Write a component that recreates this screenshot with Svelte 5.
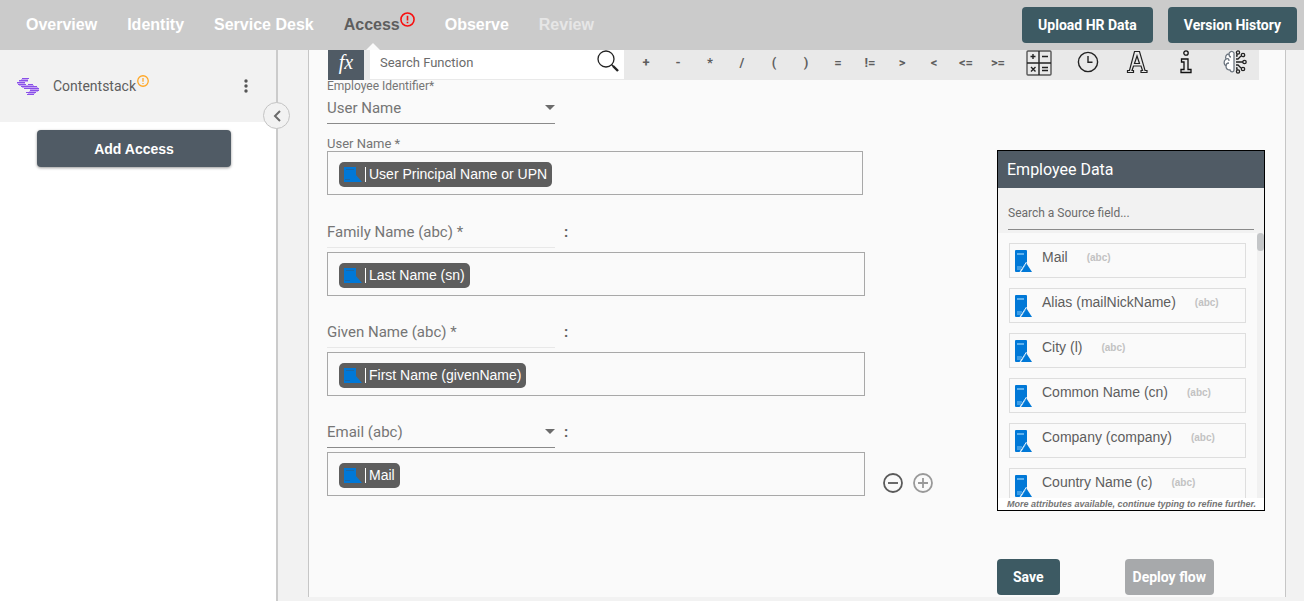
<script lang="ts">
    type Tab = { name: string; state?: string };

    const tabs: Tab[] = [
        { name: "Overview" },
        { name: "Identity" },
        { name: "Service Desk" },
        { name: "Access", state: "active" },
        { name: "Observe" },
        { name: "Review", state: "muted" },
    ];

    const operators = ["+", "-", "*", "/", "(", ")", "=", "!=", ">", "<", "<=", ">="];

    const mappings = [
        { field: "Family Name (abc) *", value: "Last Name (sn)", editable: false },
        { field: "Given Name (abc) *", value: "First Name (givenName)", editable: false },
        { field: "Email (abc)", value: "Mail", editable: true },
    ];

    const attributes = [
        "Mail",
        "Alias (mailNickName)",
        "City (l)",
        "Common Name (cn)",
        "Company (company)",
        "Country Name (c)",
    ];

    let functionQuery = $state("");
    let sourceQuery = $state("");

    let shown = $derived(
        attributes.filter((a) => a.toLowerCase().includes(sourceQuery.toLowerCase())),
    );
</script>

{#snippet alertIcon()}
    <svg viewBox="0 0 16 16" fill="none" stroke="currentColor" stroke-width="1.7">
        <circle cx="8" cy="8" r="7" />
        <path d="M8 4v5M8 10.5v1.6" />
    </svg>
{/snippet}

{#snippet chip(text: string)}
    <span class="chip">
        <svg width="18" height="15" viewBox="0 0 18 15">
            <path d="M0 0h12v9l-4 6H0z" fill="#0078d7" />
            <path d="M12 8l6 7H7z" fill="#0078d7" />
            <path d="M2 2.5h8M1 12.5h5" stroke="#1b68a8" />
        </svg>
        <span class="chip-text">{text}</span>
    </span>
{/snippet}

<header>
    <nav>
        {#each tabs as tab}
            <a href="#{tab.name}" class={tab.state}>
                {tab.name}
                {#if tab.state === "active"}
                    <span class="tab-alert">{@render alertIcon()}</span>
                {/if}
            </a>
        {/each}
    </nav>
    <div class="header-actions">
        <button class="teal">Upload HR Data</button>
        <button class="teal">Version History</button>
    </div>
</header>

<div class="layout">
    <aside>
        <div class="app-item">
            <svg class="logo" width="22" height="17" viewBox="0 0 22 17" fill="none">
                <g stroke="#c3a3f3" stroke-width="1">
                    <path d="M4 1.5h7M2 3.500h9M0 5.500h8M2 7.500h11M5 9.500h8" />
                    <path d="M10 7.500h7M12 9.500h9M13 11.500h9M12 13.500h9M11 15.500h7" />
                </g>
                <g stroke="#8a50e8" stroke-width="1.1">
                    <path d="M5 .5h7M2 2.500h9M0 4.500h8M1 6.500h8M4 8.500h8M7 10.500h6" />
                    <path d="M11 6.500h5M12 8.500h8M13 10.500h9M13 12.500h9M9 14.500h10M10 16.500h7" />
                </g>
            </svg>
            <span class="app-name">Contentstack</span>
            <span class="app-alert">{@render alertIcon()}</span>
            <button class="more" aria-label="More options">
                <svg width="4" height="14" viewBox="0 0 4 14" fill="#555">
                    <circle cx="2" cy="2" r="1.7" />
                    <circle cx="2" cy="7" r="1.7" />
                    <circle cx="2" cy="12" r="1.7" />
                </svg>
            </button>
        </div>
        <button class="add-access">Add Access</button>
        <button class="collapse" aria-label="Collapse sidebar">
            <svg width="8" height="12" viewBox="0 0 8 12" fill="none" stroke="#6b6b6b" stroke-width="2">
                <path d="M7 1L2 6l5 5" />
            </svg>
        </button>
    </aside>

    <main>
        <div class="toolbar">
            <span class="fx">fx</span>
            <div class="search-function">
                <input type="text" placeholder="Search Function" aria-label="Search Function" bind:value={functionQuery} />
                <svg width="22" height="22" viewBox="0 0 22 22" fill="none" stroke="#222">
                    <circle cx="9" cy="9" r="8" stroke-width="1.3" />
                    <path d="M14.5 14.5l2 2" stroke-width="1.3" />
                    <path d="M16 16l5 5" stroke-width="2.4" />
                </svg>
            </div>
            <div class="operators">
                {#each operators as op}
                    <button>{op}</button>
                {/each}
            </div>
            <div class="function-groups">
                <button aria-label="Math functions">
                    <svg width="26" height="26" viewBox="0 0 26 26" fill="none" stroke="#222">
                        <rect x="1" y="1" width="24" height="24" rx="1" stroke="#555" stroke-width="1.4" />
                        <path d="M13 1v24M1 13h24" stroke-width="1.4" />
                        <path d="M4.5 6.5h5M7 4v5M16 6.5h6M5 17l4.5 4.5M9.5 17L5 21.5M16 17.5h6M16 20.5h6" stroke-width="1.4" />
                    </svg>
                </button>
                <button aria-label="Date functions">
                    <svg width="22" height="22" viewBox="0 0 22 22" fill="none" stroke="#222" stroke-width="1.4">
                        <circle cx="11" cy="11" r="9.6" />
                        <path d="M11 5v6.3h4.5" />
                    </svg>
                </button>
                <button aria-label="Text functions">
                    <svg width="22" height="24" viewBox="0 0 22 24" fill="none" stroke="#222" stroke-width="1.2">
                        <path d="M8.5 1.5h5l5.500 19h2v2h-6v-2h1.500l-1.500-4.500H7.500L6 20.500h1.500v2h-6v-2h2zM11 6L8.500 13.500h5z" />
                    </svg>
                </button>
                <button aria-label="Information functions">
                    <svg width="12" height="24" viewBox="0 0 12 24" fill="none" stroke="#111" stroke-width="1.3">
                        <circle cx="6" cy="3" r="2.2" />
                        <path d="M1.5 9h6.5v10.5h3v3H1v-3h3V12H1.5z" />
                    </svg>
                </button>
                <button aria-label="Smart functions">
                    <svg width="24" height="24" viewBox="0 0 24 24" fill="none" stroke="#222" stroke-width="1.3">
                        <path d="M11 3C9 0 6 2 6 4 3 4 2 7 3 9c-3 2-2 6 0 7 0 3 2 4 4 4 1 3 4 2 4 0z" fill="#fff" stroke="#6d7680" />
                        <path d="M6 4c0 2 1 3 2 3M3 9c2-1 3 0 3 2M3 16c0-2 1-3 3-3" stroke="#6d7680" />
                        <path d="M13 9h2l3-3M13 12h7M13 15h2l3 3M13 6h1v-2M13 18h1v2" />
                        <circle cx="15" cy="2.5" r="1.6" />
                        <circle cx="20" cy="5" r="1.7" />
                        <circle cx="21.5" cy="12" r="1.7" />
                        <circle cx="20" cy="19" r="1.7" />
                        <circle cx="15" cy="21.5" r="1.6" />
                    </svg>
                </button>
            </div>
        </div>

        <div class="content">
            <form>
                <label class="small-label" for="identifier">Employee Identifier*</label>
                <div class="select">
                    <select id="identifier">
                        <option>User Name</option>
                    </select>
                </div>
                <span class="small-label user-label" id="user-name">User Name *</span>
                <div class="box first" role="textbox" tabindex="0" aria-labelledby="user-name">
                    {@render chip("User Principal Name or UPN")}
                </div>

                {#each mappings as m}
                    <div class="mapping">
                        <div class="field-row">
                            {#if m.editable}
                                <div class="select">
                                    <select aria-label="Target field">
                                        <option>{m.field}</option>
                                    </select>
                                </div>
                            {:else}
                                <input class="field-name" type="text" readonly value={m.field} aria-label="Target field" />
                            {/if}
                            <span class="colon">:</span>
                        </div>
                        <div class="value-row">
                            <div class="box" role="textbox" tabindex="0" aria-label={m.field}>
                                {@render chip(m.value)}
                            </div>
                            {#if m.editable}
                                <div class="row-actions">
                                    <button type="button" aria-label="Remove field">
                                        <svg width="20" height="20" viewBox="0 0 20 20" fill="none" stroke="#5a5a5a" stroke-width="1.8">
                                            <circle cx="10" cy="10" r="9" />
                                            <path d="M5 10h10" />
                                        </svg>
                                    </button>
                                    <button type="button" aria-label="Add field">
                                        <svg width="20" height="20" viewBox="0 0 20 20" fill="none" stroke="#999" stroke-width="1.8">
                                            <circle cx="10" cy="10" r="9" />
                                            <path d="M5 10h10M10 5v10" />
                                        </svg>
                                    </button>
                                </div>
                            {/if}
                        </div>
                    </div>
                {/each}
            </form>

            <div class="side">
                <section class="source">
                    <h2>Employee Data</h2>
                    <div class="source-search">
                        <input type="text" placeholder="Search a Source field..." aria-label="Search a Source field" bind:value={sourceQuery} />
                    </div>
                    <div class="source-list">
                        <ul>
                            {#each shown as name}
                                <li>
                                    <svg width="18" height="22" viewBox="0 0 18 22">
                                        <path d="M0 1q0-1 1-1h10q1 0 1 1v12L5 22H1q-1 0-1-1z" fill="#0078d7" />
                                        <path d="M11.5 13.5L17 22H6z" fill="#0078d7" />
                                        <path d="M2 4h7" stroke="#7fc4f5" stroke-width="1.5" />
                                        <path d="M2 17h5M2 19h4" stroke="#7fc4f5" />
                                        <path d="M11.5 12L5 22" stroke="#e8f4fd" />
                                    </svg>
                                    <span>{name}</span>
                                    <small>(abc)</small>
                                </li>
                            {/each}
                        </ul>
                        <div class="track"><div class="thumb"></div></div>
                    </div>
                    <p>More attributes available, continue typing to refine further.</p>
                </section>
                <div class="footer-actions">
                    <button class="teal save">Save</button>
                    <button class="teal deploy" disabled>Deploy flow</button>
                </div>
            </div>
        </div>
    </main>
</div>

<style>
    :global(body) {
        background: #f2f2f2;
        font-family: Roboto, sans-serif;
        color: #5e5e5e;
        overflow-x: hidden;
    }

    :global(*) {
        box-sizing: border-box;
    }

    button,
    input,
    select {
        font-family: inherit;
        color: inherit;
        border: none;
        background: none;
        padding: 0;
        margin: 0;
    }

    svg {
        display: block;
        flex: none;
    }

    header {
        display: flex;
        justify-content: space-between;
        align-items: center;
        height: 50px;
        padding: 0 7px 0 26px;
        background: #cbcbcb;
    }

    nav {
        display: flex;
        gap: 30px;
        height: 50px;
    }

    nav a {
        position: relative;
        display: flex;
        align-items: center;
        font: bold 16px/48px "Liberation Sans", Arial, sans-serif;
        color: #fff;
        text-decoration: none;
        white-space: nowrap;
    }

    nav a.active {
        color: #5e5e5e;
        padding-right: 15px;
    }

    nav a.active::after {
        content: "";
        position: absolute;
        left: 22px;
        bottom: 0;
        border: 7px solid transparent;
        border-top: 0;
        border-bottom-color: #fafafa;
    }

    nav a.muted {
        color: #e6e6e6;
    }

    .tab-alert {
        position: absolute;
        right: 0;
        top: 12px;
        width: 15px;
        color: #f80f0f;
    }

    .header-actions {
        display: flex;
        gap: 15px;
    }

    .teal {
        height: 36px;
        padding: 0 16px;
        border-radius: 4px;
        background: #3d5a63;
        color: #fff;
        font-size: 14px;
        font-weight: 700;
        white-space: nowrap;
    }

    .layout {
        display: flex;
        min-height: calc(100vh - 50px);
    }

    aside {
        position: relative;
        flex: none;
        width: 278px;
        border-right: 2px solid #cbcbcb;
        background: #fff;
    }

    .app-item {
        display: flex;
        align-items: center;
        height: 72px;
        padding: 0 28px 0 17px;
        background: #f2f2f2;
    }

    .app-name {
        margin-left: 14px;
        font-size: 14px;
        line-height: 20px;
    }

    .app-alert {
        align-self: flex-start;
        width: 12px;
        margin: 25px auto 0 1px;
        color: #ffa726;
    }

    .add-access {
        display: block;
        width: 194px;
        height: 37px;
        margin: 8px 0 0 37px;
        border-radius: 4px;
        background: #505b65;
        box-shadow: 0 1px 3px rgba(0, 0, 0, 0.4);
        color: #fff;
        font: bold 14px "Liberation Sans", Arial, sans-serif;
    }

    .collapse {
        position: absolute;
        right: -14px;
        top: 52px;
        display: grid;
        place-items: center;
        width: 27px;
        height: 27px;
        border: 1px solid #c4c4c4;
        border-radius: 50%;
        background: #f2f2f2;
    }

    main {
        flex: 1;
        min-width: 0;
        margin: 0 18px 4px 30px;
        border: solid #c6c6c6;
        border-width: 0 1px;
        background: #fafafa;
    }

    .toolbar {
        display: flex;
        height: 30px;
        margin: 0 26px 0 19px;
        background: #e9e9e9;
    }

    .fx {
        width: 36px;
        margin-right: 6px;
        background: #505b65;
        color: #fff;
        font: italic 20px/24px "Liberation Serif", serif;
        text-align: center;
    }

    .search-function {
        display: flex;
        flex: 1;
        min-width: 0;
        height: 29px;
        padding: 0 5px 0 10px;
        background: #fff;
    }

    .search-function input {
        flex: 1;
        min-width: 0;
        height: 24px;
        font-size: 13px;
        outline: none;
    }

    input::placeholder {
        color: #6b6b6b;
        opacity: 1;
    }

    .operators {
        display: flex;
        margin-left: 6px;
    }

    .operators button {
        width: 32px;
        height: 24px;
        font-size: 13px;
        font-weight: 700;
    }

    .function-groups {
        display: flex;
    }

    .function-groups button {
        display: grid;
        place-items: center;
        width: 49px;
        height: 24px;
    }

    .content {
        display: flex;
        justify-content: space-between;
        padding: 0 20px 0 18px;
    }

    .small-label {
        display: block;
        font-size: 12px;
        line-height: 12px;
        color: #757575;
    }

    .user-label {
        padding: 14px 0 1px;
        font-size: 13px;
    }

    .select {
        position: relative;
        width: 228px;
    }

    .select::after {
        content: "";
        position: absolute;
        right: 0;
        top: 13px;
        border: 5px solid transparent;
        border-top-color: #6b6b6b;
        border-bottom: 0;
        pointer-events: none;
    }

    select,
    .field-name {
        display: block;
        appearance: none;
        width: 228px;
        height: 32px;
        border-bottom: 1px solid #8a8a8a;
        border-radius: 0;
        font-size: 15px;
        color: #757575;
        outline: none;
    }

    .field-name {
        border-bottom-color: #e8e8e8;
    }

    .box {
        display: flex;
        align-items: center;
        width: 538px;
        height: 44px;
        padding: 2px 11px 0;
        border: 1px solid #a8a8a8;
    }

    .first {
        width: 536px;
        margin-bottom: 21px;
    }

    .chip {
        display: flex;
        align-items: center;
        height: 25px;
        padding: 0 5px;
        border-radius: 5px;
        background: #5e5e5e;
        color: #fff;
        font: 14px "Liberation Sans", Arial, sans-serif;
        white-space: nowrap;
    }

    .chip-text {
        margin-left: 3px;
        padding-left: 3px;
        border-left: 1px solid #fff;
        line-height: 15px;
    }

    .mapping {
        margin-bottom: 20px;
    }

    .field-row {
        display: flex;
        align-items: center;
        gap: 9px;
        margin-bottom: 4px;
    }

    .colon {
        font-size: 15px;
        font-weight: 700;
    }

    .value-row {
        display: flex;
        align-items: center;
        gap: 18px;
    }

    .row-actions {
        display: flex;
        gap: 10px;
        padding-top: 18px;
    }

    .side {
        flex: none;
        width: 268px;
        padding-top: 70px;
    }

    .source {
        border: 1px solid #000;
    }

    h2 {
        margin: 0;
        padding-left: 9px;
        background: #505b65;
        color: #fff;
        font-size: 16px;
        font-weight: 400;
        line-height: 37px;
    }

    .source-search {
        height: 45px;
        padding: 8px 10px 0;
        background: #f2f2f2;
    }

    .source-search input {
        width: 100%;
        height: 34px;
        border-bottom: 1px solid #8a8a8a;
        font-size: 12px;
        outline: none;
    }

    .source-list {
        display: flex;
        height: 265px;
        overflow: hidden;
    }

    ul {
        flex: 1;
        margin: 0;
        padding: 10px 11px 0;
        list-style: none;
    }

    li {
        display: flex;
        height: 35px;
        margin-bottom: 10px;
        padding: 5px 5px 0;
        border: 1px solid #dedede;
        font: 14px/16px "Liberation Sans", Arial, sans-serif;
        white-space: nowrap;
    }

    li svg {
        margin-top: 1px;
    }

    li span {
        margin: 0 19px 0 9px;
    }

    small {
        font-size: 10px;
        font-weight: 700;
        line-height: 18px;
        color: #c2c2c2;
    }

    .track {
        width: 7px;
        background: #f1f1f1;
    }

    .thumb {
        height: 18px;
        border-radius: 4px;
        background: #c4c6c8;
    }

    .source p {
        margin: 0;
        padding-left: 9px;
        background: #fff;
        font: italic bold 9px/12px "Liberation Sans", Arial, sans-serif;
        color: #757575;
        white-space: nowrap;
    }

    .footer-actions {
        display: flex;
        gap: 65px;
        padding: 48px 0 2px;
    }

    .deploy {
        padding: 0 8px;
        background: #a7a9ab;
    }
</style>
